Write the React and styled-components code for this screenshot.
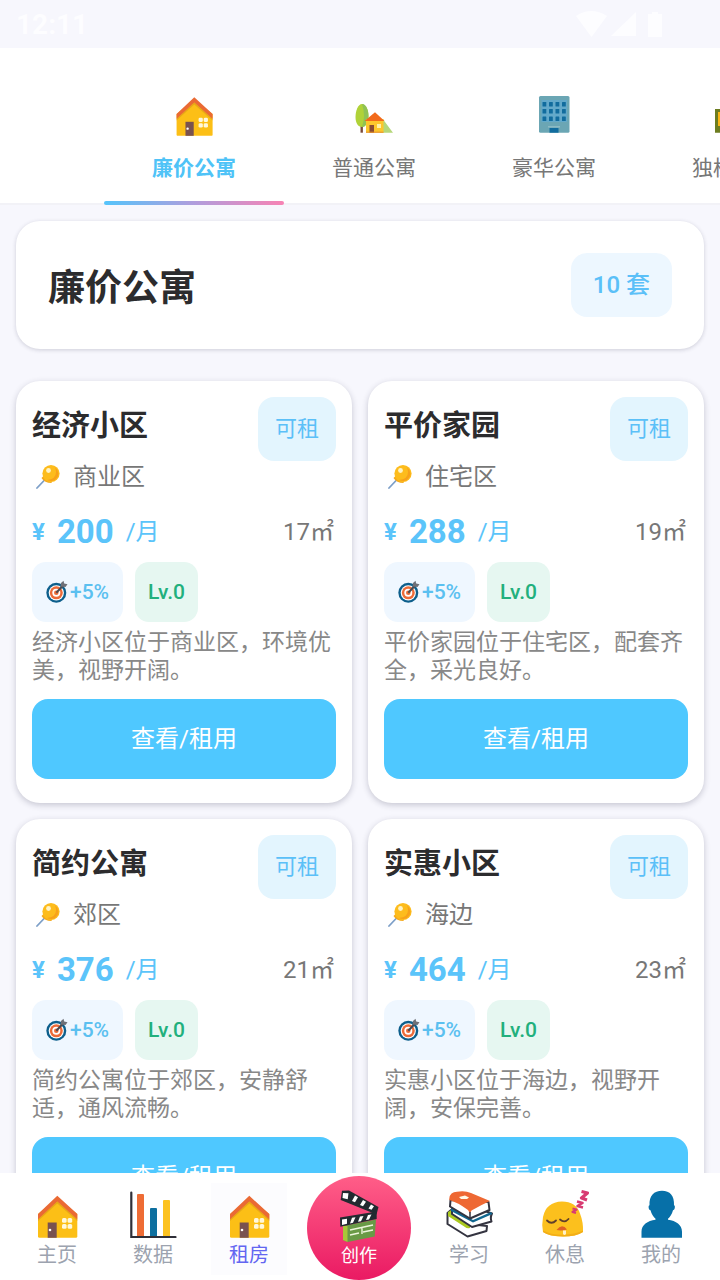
import React, { useState } from 'react';
import styled, { createGlobalStyle } from 'styled-components';

const GlobalStyle = createGlobalStyle`
  * {
    box-sizing: border-box;
  }
  body {
    margin: 0;
    background: #f7f7fd;
    color: #2c2c2e;
    font-family: Roboto, 'Noto Sans CJK SC', sans-serif;
  }
  button {
    border: 0;
    padding: 0;
    background: none;
    font-family: inherit;
    cursor: pointer;
  }
  h1, h2, p {
    margin: 0;
  }
  svg {
    display: block;
    flex-shrink: 0;
  }
`;

const PageDiv = styled('div')`
  height: 100vh;
  display: flex;
  flex-direction: column;
  overflow: hidden;
`;

const StatusBar = styled('div')`
  height: 48px;
  padding: 0 56px 0 16px;
  display: flex;
  flex-shrink: 0;
  align-items: center;
  justify-content: space-between;
  color: #fdfdff;
  font-size: 28px;
  font-weight: 700;
`;

const TabBar = styled('nav')`
  height: 157px;
  padding-left: 104px;
  display: flex;
  flex-shrink: 0;
  overflow: hidden;
  background: #ffffff;
  box-shadow: inset 0 -2px 0 #f2f2f7;
`;

const TabButton = styled('button')`
  width: 180px;
  flex-shrink: 0;
  display: flex;
  flex-direction: column;
  align-items: center;
  padding-top: 44px;
  color: ${(props) => (props.$active ? '#4fc3f7' : '#777777')};
  font-size: 21px;
  font-weight: ${(props) => (props.$active ? 700 : 400)};
  line-height: 32px;
  white-space: nowrap;

  span {
    margin-top: 16px;
  }
  &::after {
    content: '';
    width: 100%;
    height: 4px;
    margin-top: auto;
    border-radius: 2px;
    background: ${(props) =>
      props.$active ? 'linear-gradient(90deg, #54c4fb, #b09ddd 50%, #f783b4)' : 'none'};
  }
`;

const ContentMain = styled('main')`
  flex: 1;
  min-height: 0;
  overflow: hidden;
  padding: 16px;
`;

const SummarySection = styled('section')`
  height: 128px;
  padding: 0 32px;
  display: flex;
  align-items: center;
  justify-content: space-between;
  border-radius: 24px;
  background: #ffffff;
  box-shadow: 0 1px 4px rgba(40, 40, 70, 0.2);
`;

const SummaryTitle = styled('h1')`
  padding-top: 8px;
  font-size: 37px;
  line-height: 48px;
`;

const Badge = styled('span')`
  height: 64px;
  padding: 0 ${(props) => (props.$wide ? 22 : 17)}px;
  flex-shrink: 0;
  border-radius: 16px;
  background: ${(props) => (props.$wide ? '#edf7ff' : '#e3f5fe')};
  color: #5bc0f8;
  font-size: ${(props) => (props.$wide ? 24 : 22)}px;
  font-weight: ${(props) => (props.$wide ? 500 : 400)};
  line-height: 64px;
`;

const CardGrid = styled('div')`
  margin-top: 32px;
  display: grid;
  grid-template-columns: 1fr 1fr;
  gap: 16px;
`;

const CardArticle = styled('article')`
  padding: 16px 16px 24px;
  border-radius: 24px;
  background: #ffffff;
  box-shadow: 0 2px 6px rgba(40, 40, 70, 0.24);
`;

const CardHeader = styled('div')`
  display: flex;
  justify-content: space-between;
`;

const CardTitle = styled('h2')`
  font-size: 29px;
  line-height: 58px;
`;

const LocationDiv = styled('div')`
  height: 32px;
  display: flex;
  align-items: center;
  gap: 13px;
  padding-left: 4px;
  color: #777777;
  font-size: 24px;
  line-height: 32px;
`;

const PriceRow = styled('div')`
  height: 40px;
  margin-top: 19px;
  display: flex;
  align-items: center;
  padding-right: 2px;
  color: #777777;
  font-size: 24px;
  line-height: 40px;
`;

const PriceDiv = styled('div')`
  flex: 1;
  display: flex;
  align-items: center;
  gap: 12px;
  color: #5bc4fa;

  b {
    font-size: 33px;
  }
`;

const ChipRow = styled('div')`
  margin-top: 10px;
  display: flex;
  gap: 12px;
`;

const Chip = styled('span')`
  height: 60px;
  padding: 0 ${(props) => (props.$green ? 13 : 14)}px;
  display: flex;
  align-items: center;
  gap: 2px;
  border-radius: 14px;
  background: ${(props) => (props.$green ? '#e6f7f1' : '#eff7ff')};
  color: ${(props) => (props.$green ? '#22b07d' : '#5bc0f0')};
  font-size: 21px;
  font-weight: 500;
`;

const DescText = styled('p')`
  margin-top: 7px;
  color: #888888;
  font-size: 23px;
  line-height: 28px;
`;

const RentButton = styled('button')`
  width: 100%;
  height: 80px;
  margin-top: 14px;
  padding-bottom: 6px;
  border-radius: 16px;
  background: #4fc8ff;
  color: #ffffff;
  font-size: 24px;
`;

const BottomNav = styled('nav')`
  height: 107px;
  padding: 0 11px 0 9px;
  display: flex;
  flex-shrink: 0;
  background: #ffffff;
`;

const NavLink = styled('a')`
  flex: 96;
  height: 92px;
  margin-top: 10px;
  padding-top: 7px;
  display: flex;
  flex-direction: column;
  align-items: center;
  color: ${(props) => (props.$active ? '#6366f1' : '#9ca3af')};
  font-size: 20px;
  line-height: 34px;
  text-decoration: none;

  &[aria-current] {
    background: linear-gradient(#fcfcfe, #fcfcfe) center / 76px 100% no-repeat;
  }
`;

const CreateSlot = styled('div')`
  flex: 124;
  display: flex;
  justify-content: center;
`;

const CreateButton = styled('button')`
  width: 104px;
  height: 104px;
  margin-top: 3px;
  padding-top: 14px;
  display: flex;
  flex-direction: column;
  align-items: center;
  border-radius: 50%;
  background: linear-gradient(#ff5e88, #ea1a63);
  color: #ffffff;
  font-size: 18px;
  line-height: 24px;
`;

const HouseIcon = ({ size }) => (
  <svg width={size} height={size} viewBox="0 0 48 48">
    <path d="M5 24 24.3 8 44.3 24v22.5q0 1.3-1.5 1.3H6.500Q5 47.800 5 46.500Z" fill="#fcbf16" />
    <path d="M5 29.500V24L24.300 5.800 44.300 24v5.500L24.300 11.500Z" fill="#ea6a34" />
    <path d="M5 29.500 24.300 11.500 44.300 29.500v1.500L24.300 13.500 5 31Z" fill="#d99a18" opacity=".6" />
    <path d="M14.700 32.500h9v15.300h-9z" fill="#795250" />
    <circle cx="17" cy="40" r="1.300" fill="#fff" />
    <g fill="#fff8dc">
      <rect x="29" y="28" width="4.600" height="4.800" rx="1.500" />
      <rect x="34.600" y="28" width="4.600" height="4.800" rx="1.500" />
      <rect x="29" y="34" width="4.600" height="4.800" rx="1.500" />
      <rect x="34.600" y="34" width="4.600" height="4.800" rx="1.500" />
    </g>
  </svg>
);

const GardenIcon = ({ size }) => (
  <svg width={size} height={size} viewBox="0 0 44 44">
    <path d="M28 40.700V27q3-1 5 3l8 10.700Z" fill="#b5d77a" />
    <path d="M8.500 33h2.400v7.700H8.500z" fill="#7b4a3a" />
    <path d="M10 12c4 0 6.500 6 6.500 12s-2.500 11-6.500 11-6.500-4-6.500-10S6 12 10 12Z" fill="#b0d238" />
    <path d="M10 12c4 0 6.500 6 6.500 12s-2.500 11-6.500 11q4-11 0-23Z" fill="#8fc255" />
    <path d="M14 27h17.500v13.700H14z" fill="#fdc62c" />
    <path d="M23 20.300 32.500 29h-20Z" fill="#f26a1b" />
    <path d="M17.500 33h4.500v7.700h-4.500z" fill="#8a4b33" />
    <path d="M25 32h4v4h-4z" fill="#fff0a8" />
    <path d="M14 39.700h17.500v1H14z" fill="#e8902a" />
  </svg>
);

const BuildingIcon = ({ size }) => (
  <svg width={size} height={size} viewBox="0 0 44 44">
    <rect x="7" y="4" width="30.500" height="36.700" rx="1.500" fill="#6ba6b4" />
    <path d="M9.500 8h25.500v22H9.500z" fill="#63a9ca" />
    {[10, 17, 24.5].map((y) =>
      [10.5, 17, 23.5, 30].map((x) => (
        <rect key={`${x}-${y}`} x={x} y={y} width="3.800" height="4.500" rx=".5" fill="#116c9e" />
      ))
    )}
    <path d="M17.500 36h9v4.700h-9z" fill="#116c9e" />
    <path d="M16 34h12v1.500H16z" fill="#8cbac4" />
  </svg>
);

const VillaIcon = ({ size }) => (
  <svg width={size} height={size} viewBox="0 0 44 44">
    <path d="M3 17h38v23.700H3z" fill="#6d7d20" />
    <path d="M6 20h32v14H6z" fill="#fcb614" />
    <path d="M13 24h6v16h-6zM25 24h6v10h-6z" fill="#795250" />
  </svg>
);

const ChartIcon = () => (
  <svg width="48" height="48" viewBox="0 0 48 48">
    <path d="M8 47V5q0-1 1-1h5q1 0 1 1v42Z" fill="#ee6c35" />
    <path d="M21 47V19q0-1 1-1h5q1 0 1 1v28Z" fill="#0d6f9f" />
    <path d="M34 47V11q0-1 1-1h5q1 0 1 1v36Z" fill="#fcc220" />
    <path d="M2.300 2.500v44.500H46.500" fill="none" stroke="#2f2f38" strokeWidth="2.200" strokeLinecap="round" />
  </svg>
);

const ClapperIcon = () => (
  <svg width="48" height="54" viewBox="0 0 48 54">
    <path d="M8 36 41 29.500 39.700 46.500 12.500 52 8 50Z" fill="#699a46" />
    <path d="M8 36h4.500v16L8 50Z" fill="#a8c838" />
    <path d="m15 40 23-5M15 45l9-2m4-1 10-2M27 37v7" stroke="#edf5dc" strokeWidth="1.400" fill="none" />
    <path d="M7 .700 14 .500 43.500 17 41.500 24.500 5.700 10Z" fill="#232a30" />
    <path d="m8 3 5.500.2-.8 6L7.500 8Z" fill="#fff" />
    <path d="m20 5.500 3 1.700-3 5-3-1.200Zm8 4.500 3 1.700-3 4.500-3-1.200Zm8 4.500 3 1.700-2.500 3.500-3-1.200Z" fill="#fff" />
    <path d="M5 27.500 41.700 21.500V29L5.300 36.700Z" fill="#232a30" />
    <path d="m7 29.500 5-.8v5l-5 1.200Z" fill="#fff" />
    <path d="m17 27.800 3.500-.6-2.500 5.600-3 .6Zm8-1.300 3.500-.6-2.500 5.300-3 .6Zm8-1.400 3.500-.6-2.500 5-3 .6Z" fill="#fff" />
  </svg>
);

const BooksIcon = () => (
  <svg width="48" height="48" viewBox="0 0 48 48" strokeLinejoin="round">
    <path d="M2.500 23 6 20l18 14 18 2-.5 5-19 5.500L2.500 34Z" fill="#fff" stroke="#343440" strokeWidth="2" />
    <path d="M3 22 8 19 25 33v5q-3 1-5-1L3 26Z" fill="#acc91f" />
    <path d="m7 18 19-2 21 7.500q-2 4-.5 8L27 37 7 24Z" fill="#fff" stroke="#343440" strokeWidth="2" />
    <path d="m6 17 22 13 18-8 1.500 2-19.500 8.500L6 21Z" fill="#116790" />
    <path d="M5.500 10 5 16.500 25 28.500 44.500 20l-1-8Z" fill="#fff" stroke="#343440" strokeWidth="2" />
    <path d="M4.300 8.500Q5 2 12 1.800q8-1.300 14 1.200l19 8q-9 4-18.500 9.500-2 2-1.500 6Q25 22 23 20Q12 12 4.300 10Z" fill="#ee6833" />
    <path d="m14 7 6-1.500 4 2-2 1.500h-6Z" fill="#fffae8" />
    <path d="M25 22v6" stroke="#343440" strokeWidth="1.500" />
  </svg>
);

const SleepIcon = () => (
  <svg width="48" height="48" viewBox="0 0 48 48">
    <path d="M2 42q-1.500-7 0-15Q5 12 21 11.500q14 0 18 12 3.500 9 3 18.500-7 4.500-20 4.500T2 42Z" fill="#fcc01d" />
    <path d="M2 40.500V42q5 4 20 4.500 13 0 20-4.500v-1.500q-8 4-20 4.200T2 40.500Z" fill="#f3ae17" />
    <path d="M6 30.500q4.500 4.500 9 0M19 29.500q4.500 4 8.500-.5" fill="none" stroke="#603f2b" strokeWidth="1.800" strokeLinecap="round" />
    <path d="M15.500 40q5.500-7 10.500-.5-5 1.500-10.500.5Z" fill="#dd6125" />
    <path d="M22 40.500h3v3.500q-1.500 2-3 0Z" fill="#fff0c8" />
    <g fill="none" stroke="#d83b72" strokeLinejoin="round">
      <path d="m31.500 18.500 4 1-4 2.500 3.500 1" strokeWidth="2.200" />
      <path d="m36 11.500 5.500 1.500-5 3 5.500 1.500" strokeWidth="2.600" />
      <path d="m40.500 1.500 6 1.500-6 5 5.500 2" strokeWidth="3.200" />
    </g>
  </svg>
);

const PersonIcon = () => (
  <svg width="48" height="48" viewBox="0 0 48 48">
    <path d="M25 .700c8 0 12.500 5 12 14.500 1.500 0 1 5-1 5-1 4-3 6.500-5 8.500v1c8 1 14 5 14 12v6H4.500v-6c0-7 6-11 14-12v-1c-2-2-4-4.500-5-8.500-2 0-2.500-5-1-5C12 5.700 17 .700 25 .700Z" fill="#0770a8" />
  </svg>
);

const PinIcon = () => (
  <svg width="24" height="26" viewBox="0 0 24 26">
    <path d="M10.500 14 1 24" stroke="#7d9fc8" strokeWidth="1.800" strokeLinecap="round" />
    <path d="M5.500 14q3 5 10 5l1-3-7-6Z" fill="#f5a91b" />
    <circle cx="15" cy="9.500" r="8.600" fill="#fdbc1c" />
    <path d="M19 3q7 7 0 13-4 2-8 0 12-1 8-13Z" fill="#f7a21a" />
    <circle cx="12.500" cy="6.500" r="2.400" fill="#fff3c4" />
  </svg>
);

const TargetIcon = () => (
  <svg width="22" height="24" viewBox="0 0 22 24">
    <circle cx="10.300" cy="12.800" r="10" fill="#0d5f8c" />
    <circle cx="10.300" cy="12.800" r="7.600" fill="#fff" />
    <circle cx="10.300" cy="12.800" r="6.500" fill="#ec6b38" />
    <circle cx="10.300" cy="12.800" r="4" fill="#fff" />
    <circle cx="10.300" cy="12.800" r="2.300" fill="#ec6b38" />
    <path d="m10.300 12.800 7-7.500" stroke="#4a4a50" strokeWidth="2" />
    <path d="m14.500 6.500.5-3.500L17.500.8l.7 2.700 3.300.7-2 2.800Z" fill="#6f7077" />
  </svg>
);

const StatusIcons = () => (
  <svg width="88" height="28" viewBox="0 0 88 28" fill="currentColor">
    <path d="M0 6q15-10 31 0L15.500 27Z" />
    <path d="M60 2v24H35Z" />
    <path d="M76 2h6v2h4v23H72V4h4Z" />
  </svg>
);

const tabs = [
  { name: '廉价公寓', Icon: HouseIcon },
  { name: '普通公寓', Icon: GardenIcon },
  { name: '豪华公寓', Icon: BuildingIcon },
  { name: '独栋别墅', Icon: VillaIcon },
];

const houses = [
  { id: 1, name: '经济小区', area: '商业区', price: 200, size: 17, desc: '经济小区位于商业区，环境优美，视野开阔。' },
  { id: 2, name: '平价家园', area: '住宅区', price: 288, size: 19, desc: '平价家园位于住宅区，配套齐全，采光良好。' },
  { id: 3, name: '简约公寓', area: '郊区', price: 376, size: 21, desc: '简约公寓位于郊区，安静舒适，通风流畅。' },
  { id: 4, name: '实惠小区', area: '海边', price: 464, size: 23, desc: '实惠小区位于海边，视野开阔，安保完善。' },
];

const HouseCard = (props) => {
  const { house } = props;

  return (
    <CardArticle>
      <CardHeader>
        <CardTitle>{house.name}</CardTitle>
        <Badge>可租</Badge>
      </CardHeader>
      <LocationDiv>
        <PinIcon />
        {house.area}
      </LocationDiv>
      <PriceRow>
        <PriceDiv>
          <strong>¥</strong>
          <b>{house.price}</b>
          <span>/月</span>
        </PriceDiv>
        <span>{house.size}㎡</span>
      </PriceRow>
      <ChipRow>
        <Chip>
          <TargetIcon />
          +5%
        </Chip>
        <Chip $green>Lv.0</Chip>
      </ChipRow>
      <DescText>{house.desc}</DescText>
      <RentButton type="button">查看/租用</RentButton>
    </CardArticle>
  );
};

const App = () => {
  const [tab, setTab] = useState('廉价公寓');

  return (
    <PageDiv>
      <GlobalStyle />
      <StatusBar>
        <span>12:11</span>
        <StatusIcons />
      </StatusBar>
      <TabBar>
        {tabs.map(({ name, Icon }) => (
          <TabButton key={name} type="button" $active={tab === name} onClick={() => setTab(name)}>
            <Icon size={44} />
            <span>{name}</span>
          </TabButton>
        ))}
      </TabBar>
      <ContentMain>
        <SummarySection>
          <SummaryTitle>{tab}</SummaryTitle>
          <Badge $wide>10 套</Badge>
        </SummarySection>
        <CardGrid>
          {houses.map((house) => (
            <HouseCard key={house.id} house={house} />
          ))}
        </CardGrid>
      </ContentMain>
      <BottomNav>
        <NavLink href="#home">
          <HouseIcon size={48} />
          主页
        </NavLink>
        <NavLink href="#data">
          <ChartIcon />
          数据
        </NavLink>
        <NavLink href="#rent" $active aria-current="page">
          <HouseIcon size={48} />
          租房
        </NavLink>
        <CreateSlot>
          <CreateButton type="button">
            <ClapperIcon />
            创作
          </CreateButton>
        </CreateSlot>
        <NavLink href="#study">
          <BooksIcon />
          学习
        </NavLink>
        <NavLink href="#rest">
          <SleepIcon />
          休息
        </NavLink>
        <NavLink href="#mine">
          <PersonIcon />
          我的
        </NavLink>
      </BottomNav>
    </PageDiv>
  );
};

export default App;
